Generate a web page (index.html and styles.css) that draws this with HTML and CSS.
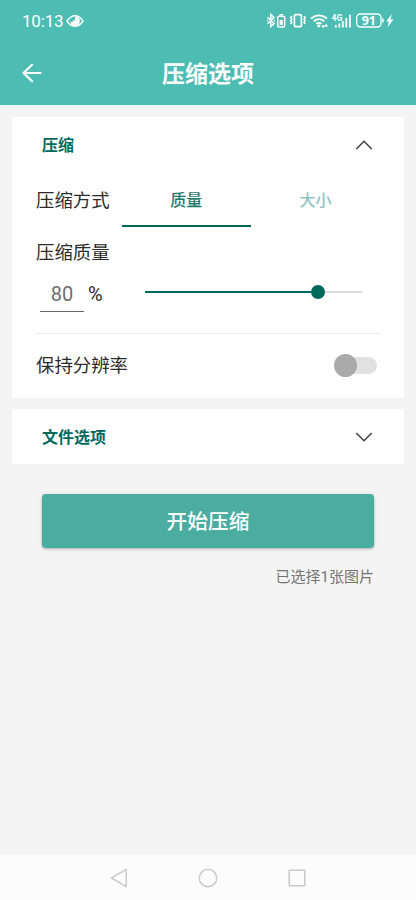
FILE: index.html
```html
<!DOCTYPE html>
<html lang="zh-CN">
<head>
<meta charset="utf-8">
<meta name="viewport" content="width=device-width, initial-scale=1">
<title>压缩选项</title>
<link rel="stylesheet" href="styles.css">
</head>
<body>
<div class="screen">
  <header class="header">
    <div class="status">
      <div class="status-left">
        <span class="clock">10:13</span>
        <svg class="eye" width="18" height="14" viewBox="0 0 18 14">
          <path d="M1 7Q4.5 1.7 9 1.7T17 7Q13.500 12.300 9 12.300T1 7Z" fill="none" stroke="#fff" stroke-width="1.400"/>
          <path d="M9.500 2.300a4.700 4.700 0 1 1-5 5.500l2.300.3-.2-2 2 .8z" fill="#fff"/>
        </svg>
      </div>
      <svg class="status-icons" width="130" height="20" viewBox="266 11 130 20" fill="none" stroke="#fff" stroke-width="1.500">
        <path d="M267.500 17.300l6.500 6.200-3.200 3V14.500l3.200 3-6.500 6.200M267 20.600h1.200M273.800 20.600h1.200"/>
        <rect x="277.700" y="16.200" width="7" height="10.800" rx="1.500"/>
        <path d="M279.500 14.700h3.400"/>
        <rect x="279.600" y="20" width="3.200" height="5" fill="#fff" stroke="none"/>
        <rect x="294.400" y="14.700" width="7" height="12" rx="1.300" stroke-width="1.700"/>
        <path d="M291.800 16l-1.200 1.600 1.200 1.600-1.200 1.600 1.200 1.600-1.200 1.600M304 16l1.200 1.600-1.200 1.600 1.200 1.600-1.200 1.600 1.200 1.600"/>
        <path d="M311 18.500q8-6.300 16 0M313.700 21.300q5.300-4.300 10.700 0M316.300 23.800q2.700-2 5.200 0" stroke-width="1.800"/>
        <circle cx="318.800" cy="25.800" r="1.600" fill="#fff" stroke="none"/>
        <path d="M322 25.500l1.200 1.500 1.200-1.500M325 26.500l1.200-1.500 1.200 1.500"/>
        <text class="network" x="331.500" y="20.500">4G</text>
        <path d="M335.800 25v2.500M339.300 23.500v4M342.800 21v6.500M346.300 18v9.500M349.900 14.700v12.800" stroke-width="1.800"/>
        <rect x="356.700" y="14" width="24.300" height="13" rx="3.700" stroke-width="1.300"/>
        <path d="M382.900 18.500v4" stroke-width="1.500"/>
        <text class="battery" x="368.800" y="25" text-anchor="middle">91</text>
        <path d="M391.800 14l-5.600 7.500h2.800l-1.700 6 6.200-8h-3z" fill="#fff" stroke="none"/>
      </svg>
    </div>
    <div class="titlebar">
      <svg class="back" width="20" height="20" viewBox="0 0 20 20" fill="none" stroke="#fff" stroke-width="2.200" stroke-linecap="round" stroke-linejoin="round"><path d="M18.500 10H1.500M10 1.700L1.500 10l8.500 8.300"/></svg>
      <h1>压缩选项</h1>
    </div>
  </header>

  <main class="content">
    <section class="card">
      <div class="card-head">
        <h2>压缩</h2>
        <svg width="18" height="12" viewBox="0 0 18 12" fill="none" stroke="#444" stroke-width="1.600"><path d="M1.300 10L9 2.300l7.700 7.700"/></svg>
      </div>
      <div class="method">
        <span class="label">压缩方式</span>
        <div class="tab active">质量</div>
        <div class="tab">大小</div>
      </div>
      <div class="label quality-label">压缩质量</div>
      <div class="quality">
        <div class="number">80</div>
        <span class="percent">%</span>
        <div class="slider"><div class="fill"></div><div class="knob"></div><div class="rest"></div></div>
      </div>
      <div class="resolution">
        <span class="label">保持分辨率</span>
        <div class="switch"><div class="thumb"></div></div>
      </div>
    </section>

    <section class="card">
      <div class="card-head">
        <h2>文件选项</h2>
        <svg width="18" height="12" viewBox="0 0 18 12" fill="none" stroke="#444" stroke-width="1.600"><path d="M1.300 2L9 9.700l7.700-7.700"/></svg>
      </div>
    </section>

    <button class="start">开始压缩</button>
    <p class="count">已选择1张图片</p>
  </main>

  <nav class="nav">
    <svg width="18" height="20" viewBox="0 0 18 20"><path d="M1.500 10L16.200 1.300v17.400z"/></svg>
    <svg width="20" height="20" viewBox="0 0 20 20"><circle cx="10" cy="10" r="8.700"/></svg>
    <svg width="18" height="20" viewBox="0 0 18 20"><rect x="1.200" y="2.200" width="15.600" height="15.600" rx=".5"/></svg>
  </nav>
</div>
</body>
</html>
```
FILE: styles.css
```css
* { box-sizing: border-box; }
body {
  margin: 0;
  background: #f4f4f4;
  font-family: Roboto, "Noto Sans CJK SC", sans-serif;
  color: #2b2b2b;
}
h1, h2, p { margin: 0; }
svg { display: block; flex: none; }
.screen { width: 416px; height: 900px; display: flex; flex-direction: column; }

.header { height: 105px; background: #4dbdb4; color: #fff; }
.status {
  height: 42px;
  padding: 0 20px 0 22px;
  display: flex;
  align-items: center;
  justify-content: space-between;
}
.status-left { display: flex; align-items: center; gap: 3px; }
.clock { width: 41px; font-size: 17px; line-height: 20px; letter-spacing: -.2px; white-space: nowrap; }
.network { font: 700 8.500px Roboto, sans-serif; fill: #fff; stroke: none; }
.battery { font: 700 12.500px "Open Sans", sans-serif; fill: #fff; stroke: none; }
.titlebar {
  height: 62px;
  padding: 0 22px;
  display: grid;
  grid-template-columns: 20px 1fr 20px;
  align-items: center;
}
.titlebar h1 { font-size: 23px; line-height: 34px; font-weight: 700; text-align: center; padding-top: 3px; }

.content { flex: 1; padding: 11.500px 12px 0; display: flex; flex-direction: column; }
.card { background: #fff; margin-bottom: 11px; padding: 0 24px; }
.card-head {
  height: 55.500px;
  padding: 1px 7px 0 6px;
  display: flex;
  align-items: center;
  justify-content: space-between;
}
.card-head h2 { font-size: 16px; line-height: 24px; font-weight: 700; color: #00695c; padding-top: 2px; }
.label { font-size: 18.400px; line-height: 28px; white-space: nowrap; }

.method { height: 55px; display: grid; grid-template-columns: 85.500px 129.500px 129px; align-items: center; }
.method .label { padding-top: 2px; }
.tab {
  height: 55px;
  display: flex;
  align-items: center;
  justify-content: center;
  font-size: 16px;
  color: #8fc5c1;
  font-weight: 500;
  border-bottom: 2.500px solid transparent;
}
.tab.active { color: #1f7a6e; border-color: #00695c; }
.quality-label { margin-top: 11.500px; }
.quality {
  height: 66px;
  padding: 4px 18px 19px 4px;
  display: flex;
  align-items: center;
}
.number {
  width: 44px;
  height: 36px;
  margin-top: 4px;
  border-bottom: 1px solid #666;
  font-size: 20px;
  line-height: 36px;
  text-align: center;
  color: #6e6e6e;
}
.percent { width: 61px; padding: 3px 0 0 4px; font-size: 20px; line-height: 28px; }
.slider { flex: 1; display: flex; align-items: center; height: 14px; }
.fill { flex: 166; height: 2.500px; background: #00695c; }
.knob { width: 14px; height: 14px; border-radius: 50%; background: #00695c; }
.rest { flex: 37; height: 2px; background: #dcdcdc; }
.resolution {
  height: 65px;
  padding-right: 3px;
  border-top: 1px solid #ededed;
  display: flex;
  align-items: center;
  justify-content: space-between;
}
.switch {
  width: 41px;
  height: 17px;
  margin-left: auto;
  border-radius: 9px;
  background: #e1e1e1;
  display: flex;
  align-items: center;
}
.thumb { flex: none; width: 23px; height: 23px; margin-left: -2px; border-radius: 50%; background: #aaa; }

.start {
  height: 54px;
  margin: 18.500px 30px 0;
  padding: 2px 0 0;
  border: 0;
  border-radius: 4px;
  background: #4aada0;
  color: #fff;
  font: 500 20.700px/30px Roboto, "Noto Sans CJK SC", sans-serif;
  box-shadow: 0 1px 3px rgba(0, 0, 0, .3);
}
.count { margin: 18px 30px 0; text-align: right; font-size: 15px; line-height: 22px; color: #757575; }

.nav {
  height: 45px;
  background: #fcfcfc;
  padding: 0 110px;
  display: flex;
  align-items: center;
  justify-content: space-between;
}
.nav svg { fill: none; stroke: #cacaca; stroke-width: 1.500; stroke-linejoin: round; }
```
